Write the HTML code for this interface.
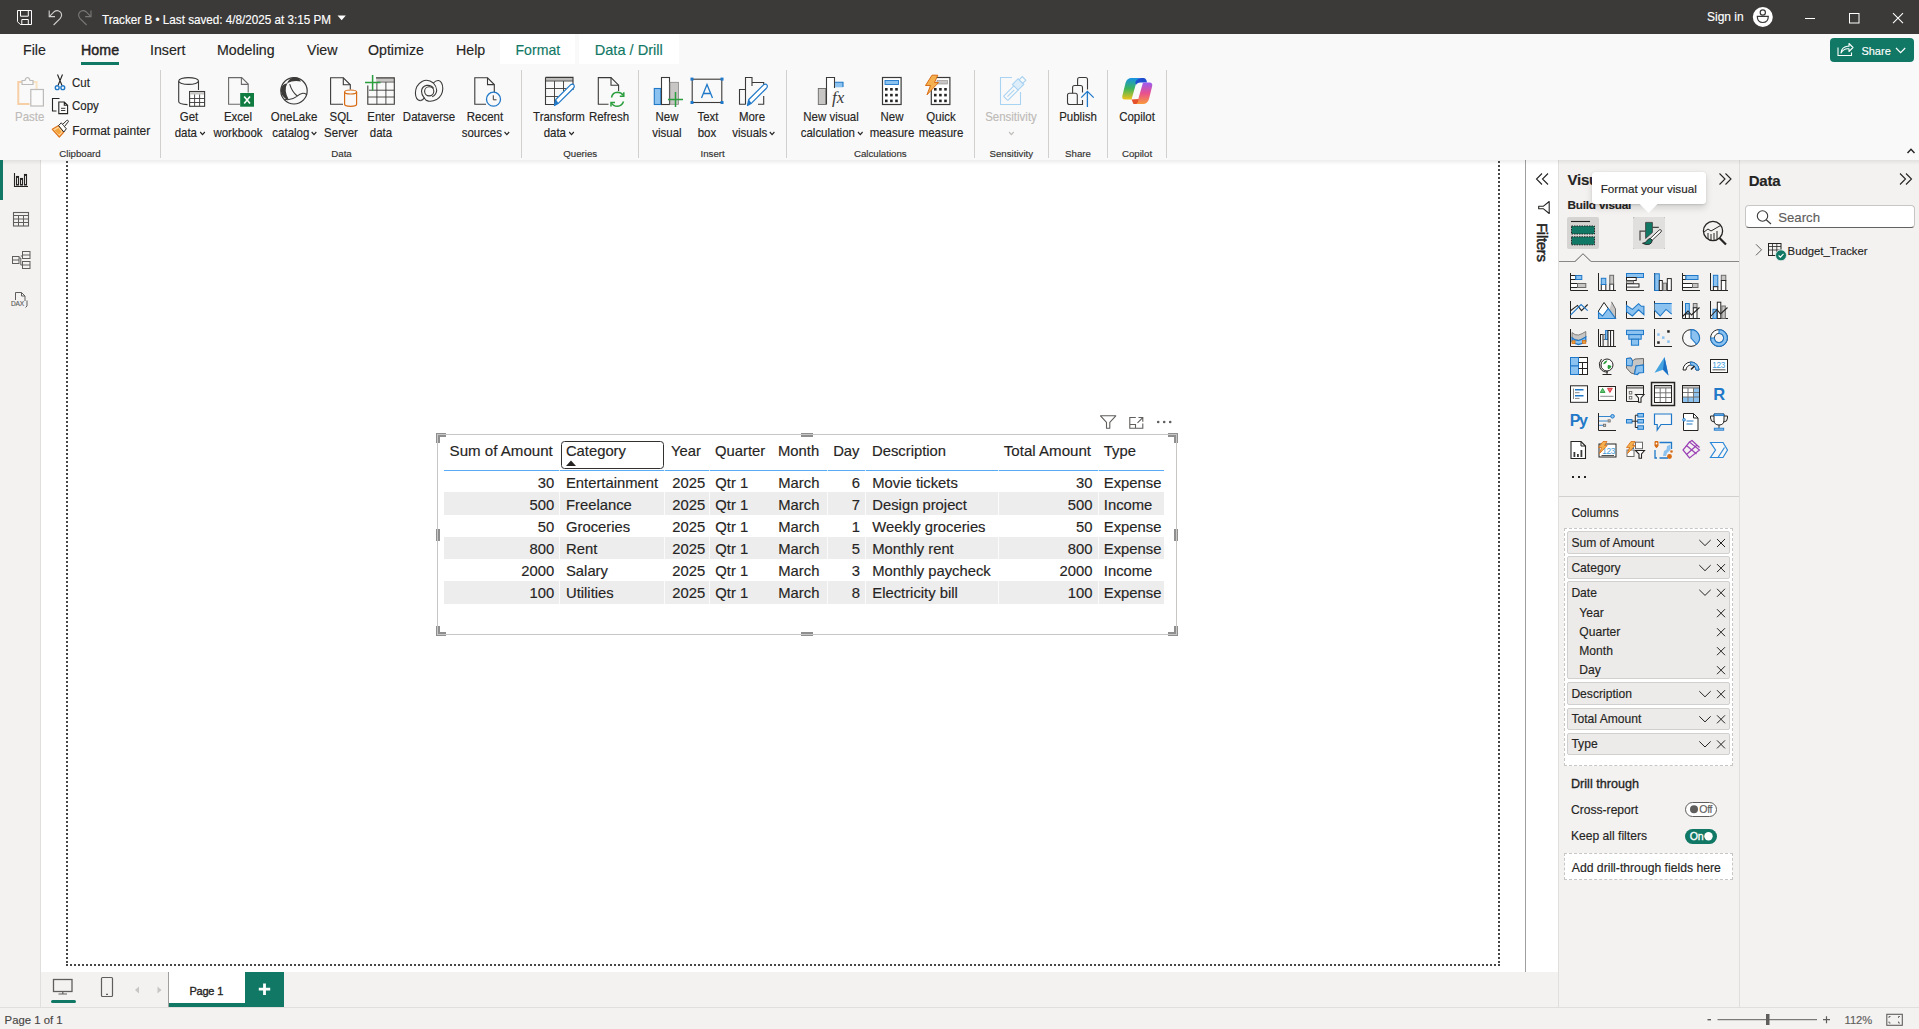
<!DOCTYPE html>
<html><head><meta charset="utf-8"><style>
html,body{margin:0;padding:0;}
body{width:1919px;height:1029px;overflow:hidden;position:relative;background:#ffffff;font-family:"Liberation Sans", sans-serif;}
.a{position:absolute;}
.t{position:absolute;white-space:nowrap;line-height:1;-webkit-text-stroke:0.15px currentColor;}
svg.a{overflow:visible;}
</style></head><body>
<div class="a" style="left:0px;top:0px;width:1919px;height:34px;background:#3b3a39"></div>
<div class="a" style="left:0px;top:34px;width:1919px;height:126px;background:#f9f9f9"></div>
<div class="a" style="left:0px;top:160px;width:40px;height:847px;background:#f3f2f1"></div>
<div class="a" style="left:40px;top:160px;width:1px;height:847px;background:#e1dfdd"></div>
<div class="a" style="left:41px;top:972px;width:1517px;height:35px;background:#f3f2f1"></div>
<div class="a" style="left:0px;top:1007px;width:1919px;height:1px;background:#e1dfdd"></div>
<div class="a" style="left:0px;top:1008px;width:1919px;height:21px;background:#f3f2f1"></div>
<div class="a" style="left:1525px;top:160px;width:1px;height:812px;background:#a19f9d"></div>
<div class="a" style="left:1558px;top:160px;width:1px;height:847px;background:#e1dfdd"></div>
<div class="a" style="left:1559px;top:160px;width:180px;height:847px;background:#f3f2f1"></div>
<div class="a" style="left:1739px;top:160px;width:1px;height:847px;background:#e1dfdd"></div>
<div class="a" style="left:1740px;top:160px;width:179px;height:847px;background:#f3f2f1"></div>
<div class="a" style="left:0px;top:160px;width:1919px;height:5px;background:linear-gradient(rgba(0,0,0,0.07),rgba(0,0,0,0))"></div>
<div class="a" style="left:0px;top:160px;width:3px;height:40px;background:#117865"></div>
<div class="a" style="left:66px;top:161px;width:2px;height:805px;background:repeating-linear-gradient(#484644 0 2px,transparent 2px 4px)"></div>
<div class="a" style="left:1498px;top:161px;width:2px;height:805px;background:repeating-linear-gradient(#484644 0 2px,transparent 2px 4px)"></div>
<div class="a" style="left:66px;top:964px;width:1434px;height:2px;background:repeating-linear-gradient(90deg,#484644 0 2px,transparent 2px 4px)"></div>
<div class="t" style="left:102.00px;top:14.33px;font-size:12.6px;color:#ffffff;font-weight:normal;transform:scaleX(0.928);transform-origin:0 0;">Tracker B &#8226; Last saved: 4/8/2025 at 3:15 PM</div>
<div class="t" style="left:1706.60px;top:11.36px;font-size:12.8px;color:#ffffff;font-weight:normal;transform:scaleX(0.937);transform-origin:0 0;">Sign in</div>
<div class="t" style="left:23.00px;top:43.18px;font-size:14.2px;color:#252423;font-weight:normal;">File</div>
<div class="t" style="left:150.00px;top:43.18px;font-size:14.2px;color:#252423;font-weight:normal;">Insert</div>
<div class="t" style="left:217.00px;top:43.18px;font-size:14.2px;color:#252423;font-weight:normal;">Modeling</div>
<div class="t" style="left:307.00px;top:43.18px;font-size:14.2px;color:#252423;font-weight:normal;">View</div>
<div class="t" style="left:368.00px;top:43.18px;font-size:14.2px;color:#252423;font-weight:normal;">Optimize</div>
<div class="t" style="left:456.00px;top:43.18px;font-size:14.2px;color:#252423;font-weight:normal;">Help</div>
<div class="t" style="left:81.00px;top:43.18px;font-size:14.2px;color:#252423;font-weight:normal;-webkit-text-stroke:0.45px #252423;letter-spacing:0.1px">Home</div>
<div class="a" style="left:500px;top:34px;width:75px;height:30px;background:#ffffff"></div>
<div class="a" style="left:579px;top:34px;width:100px;height:30px;background:#ffffff"></div>
<div class="t" style="left:515.50px;top:43.26px;font-size:14.1px;color:#117865;font-weight:normal;">Format</div>
<div class="t" style="left:594.70px;top:42.84px;font-size:14.6px;color:#117865;font-weight:normal;">Data / Drill</div>
<div class="a" style="left:81px;top:62px;width:38px;height:3px;background:#117865"></div>
<div class="t" style="left:14.60px;top:111.41px;font-size:12.397px;color:#bebbb8;font-weight:normal;transform:scaleX(0.927);transform-origin:0 0;">Paste</div>
<div class="t" style="left:72.20px;top:76.51px;font-size:12.397px;color:#252423;font-weight:normal;transform:scaleX(0.927);transform-origin:0 0;">Cut</div>
<div class="t" style="left:72.20px;top:100.31px;font-size:12.397px;color:#252423;font-weight:normal;transform:scaleX(0.927);transform-origin:0 0;">Copy</div>
<div class="t" style="left:72.20px;top:124.84px;font-size:12px;color:#252423;font-weight:normal;">Format painter</div>
<div class="t" style="left:129.30px;width:120px;top:111.41px;font-size:12.397px;color:#252423;font-weight:normal;text-align:center;transform:scaleX(0.927);transform-origin:50% 0;">Get</div>
<div class="t" style="left:129.50px;width:120px;top:127.21px;font-size:12.397px;color:#252423;font-weight:normal;text-align:center;transform:scaleX(0.927);transform-origin:50% 0;">data<svg width="7" height="5" viewBox="0 0 7 5" style="margin-left:2px;vertical-align:1px"><path d="M1 1L3.5 3.6L6 1" stroke="#252423" stroke-width="1.25" fill="none"/></svg></div>
<div class="t" style="left:177.80px;width:120px;top:111.41px;font-size:12.397px;color:#252423;font-weight:normal;text-align:center;transform:scaleX(0.927);transform-origin:50% 0;">Excel</div>
<div class="t" style="left:177.80px;width:120px;top:127.21px;font-size:12.397px;color:#252423;font-weight:normal;text-align:center;transform:scaleX(0.927);transform-origin:50% 0;">workbook</div>
<div class="t" style="left:233.50px;width:120px;top:111.41px;font-size:12.397px;color:#252423;font-weight:normal;text-align:center;transform:scaleX(0.927);transform-origin:50% 0;">OneLake</div>
<div class="t" style="left:234.50px;width:120px;top:127.21px;font-size:12.397px;color:#252423;font-weight:normal;text-align:center;transform:scaleX(0.927);transform-origin:50% 0;">catalog<svg width="7" height="5" viewBox="0 0 7 5" style="margin-left:2px;vertical-align:1px"><path d="M1 1L3.5 3.6L6 1" stroke="#252423" stroke-width="1.25" fill="none"/></svg></div>
<div class="t" style="left:280.80px;width:120px;top:111.41px;font-size:12.397px;color:#252423;font-weight:normal;text-align:center;transform:scaleX(0.927);transform-origin:50% 0;">SQL</div>
<div class="t" style="left:281.00px;width:120px;top:127.21px;font-size:12.397px;color:#252423;font-weight:normal;text-align:center;transform:scaleX(0.927);transform-origin:50% 0;">Server</div>
<div class="t" style="left:321.30px;width:120px;top:111.41px;font-size:12.397px;color:#252423;font-weight:normal;text-align:center;transform:scaleX(0.927);transform-origin:50% 0;">Enter</div>
<div class="t" style="left:320.80px;width:120px;top:127.21px;font-size:12.397px;color:#252423;font-weight:normal;text-align:center;transform:scaleX(0.927);transform-origin:50% 0;">data</div>
<div class="t" style="left:369.20px;width:120px;top:111.41px;font-size:12.397px;color:#252423;font-weight:normal;text-align:center;transform:scaleX(0.927);transform-origin:50% 0;">Dataverse</div>
<div class="t" style="left:425.40px;width:120px;top:111.41px;font-size:12.397px;color:#252423;font-weight:normal;text-align:center;transform:scaleX(0.927);transform-origin:50% 0;">Recent</div>
<div class="t" style="left:426.00px;width:120px;top:127.21px;font-size:12.397px;color:#252423;font-weight:normal;text-align:center;transform:scaleX(0.927);transform-origin:50% 0;">sources<svg width="7" height="5" viewBox="0 0 7 5" style="margin-left:2px;vertical-align:1px"><path d="M1 1L3.5 3.6L6 1" stroke="#252423" stroke-width="1.25" fill="none"/></svg></div>
<div class="t" style="left:498.50px;width:120px;top:111.41px;font-size:12.397px;color:#252423;font-weight:normal;text-align:center;transform:scaleX(0.927);transform-origin:50% 0;">Transform</div>
<div class="t" style="left:499.00px;width:120px;top:127.21px;font-size:12.397px;color:#252423;font-weight:normal;text-align:center;transform:scaleX(0.927);transform-origin:50% 0;">data<svg width="7" height="5" viewBox="0 0 7 5" style="margin-left:2px;vertical-align:1px"><path d="M1 1L3.5 3.6L6 1" stroke="#252423" stroke-width="1.25" fill="none"/></svg></div>
<div class="t" style="left:548.60px;width:120px;top:111.41px;font-size:12.397px;color:#252423;font-weight:normal;text-align:center;transform:scaleX(0.927);transform-origin:50% 0;">Refresh</div>
<div class="t" style="left:607.40px;width:120px;top:111.41px;font-size:12.397px;color:#252423;font-weight:normal;text-align:center;transform:scaleX(0.927);transform-origin:50% 0;">New</div>
<div class="t" style="left:607.00px;width:120px;top:127.21px;font-size:12.397px;color:#252423;font-weight:normal;text-align:center;transform:scaleX(0.927);transform-origin:50% 0;">visual</div>
<div class="t" style="left:647.50px;width:120px;top:111.41px;font-size:12.397px;color:#252423;font-weight:normal;text-align:center;transform:scaleX(0.927);transform-origin:50% 0;">Text</div>
<div class="t" style="left:647.20px;width:120px;top:127.21px;font-size:12.397px;color:#252423;font-weight:normal;text-align:center;transform:scaleX(0.927);transform-origin:50% 0;">box</div>
<div class="t" style="left:692.40px;width:120px;top:111.41px;font-size:12.397px;color:#252423;font-weight:normal;text-align:center;transform:scaleX(0.927);transform-origin:50% 0;">More</div>
<div class="t" style="left:694.00px;width:120px;top:127.21px;font-size:12.397px;color:#252423;font-weight:normal;text-align:center;transform:scaleX(0.927);transform-origin:50% 0;">visuals<svg width="7" height="5" viewBox="0 0 7 5" style="margin-left:2px;vertical-align:1px"><path d="M1 1L3.5 3.6L6 1" stroke="#252423" stroke-width="1.25" fill="none"/></svg></div>
<div class="t" style="left:771.40px;width:120px;top:111.41px;font-size:12.397px;color:#252423;font-weight:normal;text-align:center;transform:scaleX(0.927);transform-origin:50% 0;">New visual</div>
<div class="t" style="left:772.00px;width:120px;top:127.21px;font-size:12.397px;color:#252423;font-weight:normal;text-align:center;transform:scaleX(0.927);transform-origin:50% 0;">calculation<svg width="7" height="5" viewBox="0 0 7 5" style="margin-left:2px;vertical-align:1px"><path d="M1 1L3.5 3.6L6 1" stroke="#252423" stroke-width="1.25" fill="none"/></svg></div>
<div class="t" style="left:832.20px;width:120px;top:111.41px;font-size:12.397px;color:#252423;font-weight:normal;text-align:center;transform:scaleX(0.927);transform-origin:50% 0;">New</div>
<div class="t" style="left:832.10px;width:120px;top:127.21px;font-size:12.397px;color:#252423;font-weight:normal;text-align:center;transform:scaleX(0.927);transform-origin:50% 0;">measure</div>
<div class="t" style="left:881.20px;width:120px;top:111.41px;font-size:12.397px;color:#252423;font-weight:normal;text-align:center;transform:scaleX(0.927);transform-origin:50% 0;">Quick</div>
<div class="t" style="left:880.90px;width:120px;top:127.21px;font-size:12.397px;color:#252423;font-weight:normal;text-align:center;transform:scaleX(0.927);transform-origin:50% 0;">measure</div>
<div class="t" style="left:951.10px;width:120px;top:111.41px;font-size:12.397px;color:#bebbb8;font-weight:normal;text-align:center;transform:scaleX(0.927);transform-origin:50% 0;">Sensitivity</div>
<div class="t" style="left:950.30px;width:120px;top:127.21px;font-size:12.397px;color:#bebbb8;font-weight:normal;text-align:center;transform:scaleX(0.927);transform-origin:50% 0;"><svg width="7" height="5" viewBox="0 0 7 5" style="margin-left:2px;vertical-align:1px"><path d="M1 1L3.5 3.6L6 1" stroke="#bebbb8" stroke-width="1.25" fill="none"/></svg></div>
<div class="t" style="left:1017.50px;width:120px;top:111.41px;font-size:12.397px;color:#252423;font-weight:normal;text-align:center;transform:scaleX(0.927);transform-origin:50% 0;">Publish</div>
<div class="t" style="left:1077.20px;width:120px;top:111.41px;font-size:12.397px;color:#252423;font-weight:normal;text-align:center;transform:scaleX(0.927);transform-origin:50% 0;">Copilot</div>
<div class="t" style="left:20.00px;width:120px;top:148.59px;font-size:9.7px;color:#323130;font-weight:normal;text-align:center;">Clipboard</div>
<div class="t" style="left:281.50px;width:120px;top:148.59px;font-size:9.7px;color:#323130;font-weight:normal;text-align:center;">Data</div>
<div class="t" style="left:520.20px;width:120px;top:148.59px;font-size:9.7px;color:#323130;font-weight:normal;text-align:center;">Queries</div>
<div class="t" style="left:652.60px;width:120px;top:148.59px;font-size:9.7px;color:#323130;font-weight:normal;text-align:center;">Insert</div>
<div class="t" style="left:820.30px;width:120px;top:148.59px;font-size:9.7px;color:#323130;font-weight:normal;text-align:center;">Calculations</div>
<div class="t" style="left:951.30px;width:120px;top:148.59px;font-size:9.7px;color:#323130;font-weight:normal;text-align:center;">Sensitivity</div>
<div class="t" style="left:1018.00px;width:120px;top:148.59px;font-size:9.7px;color:#323130;font-weight:normal;text-align:center;">Share</div>
<div class="t" style="left:1077.00px;width:120px;top:148.59px;font-size:9.7px;color:#323130;font-weight:normal;text-align:center;">Copilot</div>
<div class="a" style="left:160px;top:70px;width:1px;height:88px;background:#d2d0ce"></div>
<div class="a" style="left:521px;top:70px;width:1px;height:88px;background:#d2d0ce"></div>
<div class="a" style="left:638px;top:70px;width:1px;height:88px;background:#d2d0ce"></div>
<div class="a" style="left:786px;top:70px;width:1px;height:88px;background:#d2d0ce"></div>
<div class="a" style="left:974px;top:70px;width:1px;height:88px;background:#d2d0ce"></div>
<div class="a" style="left:1048px;top:70px;width:1px;height:88px;background:#d2d0ce"></div>
<div class="a" style="left:1107px;top:70px;width:1px;height:88px;background:#d2d0ce"></div>
<div class="a" style="left:1166px;top:70px;width:1px;height:88px;background:#d2d0ce"></div>
<svg class="a" style="left:0;top:0" width="1919" height="1029" viewBox="0 0 1919 1029" fill="none"><path d="M21.5 82H18.3V104H29.5" stroke="#f6cfa6" stroke-width="2"/><path d="M33 82H36.6V89" stroke="#f9e4c4" stroke-width="2"/><path d="M22 84.5V80.5H25Q25.5 77.5 27.5 77.5Q29.5 77.5 30 80.5H33V84.5Z" stroke="#bdbbb9" stroke-width="1.2" fill="#f9f9f9"/><rect x="30.8" y="89.5" width="12.6" height="16.5" stroke="#bdbbb9" stroke-width="1.2" fill="#fbfbfb"/><path d="M57.5 74.5L62 85.5M62.5 74.5L58 85.5" stroke="#252423" stroke-width="1.1"/><circle cx="57.2" cy="87.7" r="1.9" stroke="#1f78c8" stroke-width="1.4"/><circle cx="62.8" cy="87.7" r="1.9" stroke="#1f78c8" stroke-width="1.4"/><path d="M59.5 98.5H52.5V111H56.5" stroke="#252423" stroke-width="1.1"/><path d="M58.8 102V113.6H67.6V105.3L64.3 102Z M64.3 102V105.3H67.6" stroke="#252423" stroke-width="1.1" fill="#f9f9f9"/><path d="M61 108.3H65.3M61 110.5H65.3" stroke="#252423" stroke-width="0.9"/><path d="M52.3 129.3L58.6 125.6L63.8 132L59.3 137Z" fill="#fcd79a" stroke="#e0731a" stroke-width="1.2" stroke-linejoin="round"/><path d="M54.5 130.5L58.5 128L61.5 132L58.8 134.5Z" fill="#f4a43c"/><path d="M58.6 125.6L61.3 122.8L66.3 128.8L63.8 132Z" fill="#fff" stroke="#252423" stroke-width="1"/><path d="M62.8 124.3L66.6 120.6Q67.6 119.9 68.2 120.7Q68.7 121.5 67.9 122.2L64.5 126.5" fill="#fff" stroke="#252423" stroke-width="1"/><path d="M178.7 81V101.5Q178.7 104.2 187.5 104.6" stroke="#3b3a39" stroke-width="1.1"/><ellipse cx="188.6" cy="81" rx="9.9" ry="3.4" stroke="#3b3a39" stroke-width="1.1" fill="#f9f9f9"/><path d="M198.5 81V90" stroke="#3b3a39" stroke-width="1.1"/><rect x="189.6" y="91.5" width="15" height="14.8" fill="#fff" stroke="#3b3a39" stroke-width="1.1"/><rect x="190.2" y="92.1" width="13.8" height="2.4" fill="#c8c6c4"/><path d="M194.6 94.5V106M199.6 94.5V106M189.6 98.5H204.6M189.6 102.5H204.6" stroke="#3b3a39" stroke-width="0.9"/><path d="M240 104.2H228.6V77.6H241.7L248.2 84.1V92.5" stroke="#6b6a69" stroke-width="1.1"/><path d="M241.4 77.6V84.4H248.2" stroke="#6b6a69" stroke-width="1.1"/><rect x="240.2" y="93" width="13.8" height="13.7" fill="#107c41"/><path d="M244.2 96.5L250 103.5M250 96.5L244.2 103.5" stroke="#fff" stroke-width="1.6"/><circle cx="294" cy="90.8" r="13.2" stroke="#3b3a39" stroke-width="1.2"/><path d="M287.3 83.3Q283.5 90.5 288.7 99.6L286.5 99.5Q280.6 95.5 280.8 89.5Q281.6 84.2 287.3 83.3Z" fill="#3b3a39"/><path d="M286.8 83.8Q289 78.2 294.3 77.3Q299 76.8 301 81.6Q296 80.5 291.5 81.6Q288.8 82.5 286.8 83.8Z" fill="#3b3a39"/><path d="M289.7 84.2Q292 92 297.2 96M284.5 99.3Q291 100.8 296.5 96.6Q300 93.6 302.8 93.3Q305 93.2 306.6 94.6" stroke="#3b3a39" stroke-width="1.1"/><path d="M343 104.3H330.6V77.8H343.3L350.3 84.8V89.5" stroke="#3b3a39" stroke-width="1.1"/><path d="M343.3 77.8V84.8H350.3" stroke="#3b3a39" stroke-width="1.1"/><path d="M344.6 92V104.3Q344.6 106.3 350.6 106.3Q356.6 106.3 356.6 104.3V92" stroke="#d86c14" stroke-width="1.2" fill="#f9f9f9"/><ellipse cx="350.6" cy="92" rx="6" ry="2" stroke="#d86c14" stroke-width="1.2" fill="#f9f9f9"/><rect x="376.2" y="78" width="18.2" height="3" fill="#c8c6c4"/><path d="M376 77.9H394.3V104.3H367.8V85.5" stroke="#3b3a39" stroke-width="1.1"/><path d="M376.9 82V104.3M385.9 82V104.3M376.5 82H394.3M369 90.2H394.3M367.8 97H394.3" stroke="#3b3a39" stroke-width="0.9"/><path d="M372.6 75V90.5M365 82.4H380.5" stroke="#2a9d3c" stroke-width="1.5"/><path d="M420.3 100.6Q415.6 100.2 415.4 93Q415.6 85 422 81.4Q428 78.6 433.4 83Q436.6 86.5 436.7 90.2Q436.6 94.5 432.2 96.8" stroke="#3b3a39" stroke-width="1.1"/><circle cx="429.2" cy="91.3" r="4.6" stroke="#3b3a39" stroke-width="1.1"/><path d="M424.2 98Q421.4 94.5 421.5 91Q422 86.2 426.8 85.4Q431.8 85 433.6 88.6" stroke="#3b3a39" stroke-width="1.1"/><path d="M433.4 83Q435.8 80.2 438.6 80.5Q442.6 81.6 442.8 88.6Q442.6 96 436.6 99.6Q432.6 101.6 428.6 101.1Q425.6 100.6 424.2 98Q423 100.2 420.3 100.6" stroke="#3b3a39" stroke-width="1.1"/><path d="M486 104.3H474.8V77.8H487.5L494.3 84.6V92" stroke="#3b3a39" stroke-width="1.1"/><path d="M487.5 77.8V84.6H494.3" stroke="#3b3a39" stroke-width="1.1"/><circle cx="493.5" cy="99.2" r="7" stroke="#1f78c8" stroke-width="1.3" fill="#f9f9f9"/><path d="M493.3 95.3V99.8H496.5" stroke="#3b3a39" stroke-width="1"/><rect x="545.5" y="77.5" width="27.5" height="3.2" fill="#bdbbb9"/><path d="M545.5 77.4H573V90M545.5 77.4V104.5H554" stroke="#3b3a39" stroke-width="1.1"/><path d="M545.5 81H573M545.5 88.5H566M545.5 96.5H558M554.5 81V104.5M563.5 81V91" stroke="#3b3a39" stroke-width="0.9"/><path d="M554.5 105.5L555.8 99.5L570.5 84.8Q572.8 83.5 574 85Q575 86.8 573.2 88.5L558.5 103.2Z" fill="#fff" stroke="#1f78c8" stroke-width="1.2" stroke-linejoin="round"/><path d="M554.5 105.5L555.8 99.5L558.5 103.2Z" fill="#1f78c8"/><path d="M608.5 104.3H598.3V77.6H611L618.6 85.2V91" stroke="#3b3a39" stroke-width="1.1"/><path d="M611 77.6V85.2H618.6" stroke="#3b3a39" stroke-width="1.1"/><path d="M611.5 97.5Q612.5 92.5 617.5 92.3Q621.5 92.5 623.2 95.5M623.5 101.5Q622 106 617.5 106.3Q613 106.2 611.5 103" stroke="#2a9d3c" stroke-width="1.5"/><path d="M623.8 92.3V96.3H619.8M611 106.5V102.5H615" stroke="#2a9d3c" stroke-width="1.5"/><rect x="654.3" y="88.5" width="6.5" height="16" fill="#8cc2ef" stroke="#1f78c8" stroke-width="1.1"/><rect x="661.5" y="77.5" width="8" height="27" fill="#fff" stroke="#3b3a39" stroke-width="1.1"/><rect x="670" y="82.3" width="8.5" height="22" fill="#c8c6c4" stroke="#8a8886" stroke-width="0.8"/><path d="M675.5 92V107M668 99.4H683" stroke="#2a9d3c" stroke-width="1.5"/><rect x="692.2" y="79.2" width="29.6" height="23.3" stroke="#3b3a39" stroke-width="1.1"/><rect x="690.5" y="77.6" width="3" height="3" fill="#1f78c8"/><rect x="720.5" y="77.6" width="3" height="3" fill="#1f78c8"/><rect x="690.5" y="101" width="3" height="3" fill="#1f78c8"/><rect x="720.5" y="101" width="3" height="3" fill="#1f78c8"/><path d="M701.5 98L707 84.5L712.5 98M703.5 93.5H710.5" stroke="#1f78c8" stroke-width="1.3"/><path d="M745.5 104.3H739.5V89.5H745.5M745.5 104.5V77.5H752V86M752 82.5H763.7V89M758 104.3H763.7V96" stroke="#3b3a39" stroke-width="1.1"/><path d="M747.5 105.5L748.8 99.5L763.5 84.8Q765.8 83.5 767 85Q768 86.8 766.2 88.5L751.5 103.2Z" fill="#fff" stroke="#1f78c8" stroke-width="1.2" stroke-linejoin="round"/><path d="M747.5 105.5L748.8 99.5L751.5 103.2Z" fill="#1f78c8"/><rect x="818.3" y="88.5" width="7.5" height="16" fill="#c8c6c4" stroke="#6b6a69" stroke-width="0.9"/><path d="M826.5 104.5V77.5H834.5V88" stroke="#3b3a39" stroke-width="1.1" fill="#fff"/><rect x="835" y="82.3" width="8" height="5" fill="#8cc2ef"/><path d="M835 82.3H843V87" stroke="#1f78c8" stroke-width="1.1"/><text x="832" y="103" font-family="Liberation Serif" font-style="italic" font-size="17" fill="#3b3a39">fx</text><rect x="882.5" y="77.5" width="18.6" height="27" fill="#fff" stroke="#3b3a39" stroke-width="1.2"/><rect x="885" y="80.5" width="13.5" height="4" fill="#8cc2ef" stroke="#1f78c8" stroke-width="0.9"/><rect x="885.0" y="88.0" width="2.6" height="2.6" fill="#252423"/><rect x="885.0" y="93.8" width="2.6" height="2.6" fill="#252423"/><rect x="885.0" y="99.6" width="2.6" height="2.6" fill="#252423"/><rect x="890.1" y="88.0" width="2.6" height="2.6" fill="#252423"/><rect x="890.1" y="93.8" width="2.6" height="2.6" fill="#252423"/><rect x="890.1" y="99.6" width="2.6" height="2.6" fill="#252423"/><rect x="895.2" y="88.0" width="2.6" height="2.6" fill="#252423"/><rect x="895.2" y="93.8" width="2.6" height="2.6" fill="#252423"/><rect x="895.2" y="99.6" width="2.6" height="2.6" fill="#252423"/><rect x="931.3" y="77.5" width="18.6" height="27" fill="#fff" stroke="#3b3a39" stroke-width="1.2"/><rect x="937" y="80.5" width="10.5" height="3.5" fill="#c8c6c4" stroke="#8a8886" stroke-width="0.6"/><rect x="934.0" y="88.0" width="2.6" height="2.6" fill="#252423"/><rect x="934.0" y="93.8" width="2.6" height="2.6" fill="#252423"/><rect x="934.0" y="99.6" width="2.6" height="2.6" fill="#252423"/><rect x="939.1" y="88.0" width="2.6" height="2.6" fill="#252423"/><rect x="939.1" y="93.8" width="2.6" height="2.6" fill="#252423"/><rect x="939.1" y="99.6" width="2.6" height="2.6" fill="#252423"/><rect x="944.2" y="88.0" width="2.6" height="2.6" fill="#252423"/><rect x="944.2" y="93.8" width="2.6" height="2.6" fill="#252423"/><rect x="944.2" y="99.6" width="2.6" height="2.6" fill="#252423"/><path d="M932 75.2H937.8L934.5 82.5H938.5L927 94.8L930.5 85.5H925.5Z" fill="#f4b04f" stroke="#d86c14" stroke-width="1" stroke-linejoin="round"/><path d="M1012 77.5H1000.5V104.5H1020.5V92" stroke="#a9d3f2" stroke-width="1.1"/><g transform="rotate(-45 1011 93)"><rect x="1003.5" y="90" width="15" height="6" rx="0.5" stroke="#a9d3f2" stroke-width="1.1" fill="#f9f9f9"/><path d="M1006 93H1015.5" stroke="#a9d3f2" stroke-width="1.1"/></g><g transform="rotate(-45 1019.5 83)"><rect x="1013.5" y="79" width="8" height="8" stroke="#a9d3f2" stroke-width="1.1" fill="#ddeefa"/><rect x="1021.5" y="80.5" width="4.5" height="5" stroke="#a9d3f2" stroke-width="1.1" fill="#f9f9f9"/></g><path d="M1077.3 104.5H1069.5Q1067.5 104.5 1067.5 102.5V95.3Q1067.5 93.3 1069.5 93.3H1075.3Q1077.3 93.3 1077.3 95.3Z" stroke="#3b3a39" stroke-width="1.1"/><path d="M1072.6 93.3V87.5Q1072.6 85.5 1074.6 85.5H1080.5Q1082.5 85.5 1082.5 87.5V92.5M1077.3 104.5H1082.5V100" stroke="#3b3a39" stroke-width="1.1"/><path d="M1077.6 85.5V79.5Q1077.6 77.5 1079.6 77.5H1085.5Q1087.5 77.5 1087.5 79.5V89.5" stroke="#3b3a39" stroke-width="1.1"/><path d="M1087.4 107V91.5M1081.2 97.6L1087.4 91.4L1093.7 97.6" stroke="#1f78c8" stroke-width="1.3"/><defs><linearGradient id="cpg1" x1="0" y1="0" x2="0" y2="1"><stop offset="0" stop-color="#1592e6"/><stop offset="0.5" stop-color="#3fb55a"/><stop offset="1" stop-color="#f3c21a"/></linearGradient>
<linearGradient id="cpg2" x1="0" y1="0" x2="0" y2="1"><stop offset="0" stop-color="#9b5cf0"/><stop offset="0.5" stop-color="#e9508e"/><stop offset="1" stop-color="#f89a3a"/></linearGradient></defs><path d="M1131.5 78Q1127 78 1125.5 83L1122.3 96Q1121.7 99.5 1125 99.5H1131.5L1136.5 82Q1137.8 78 1141 78Z" fill="url(#cpg1)"/><path d="M1135.3 82.5Q1137 78 1141 78H1144Q1146.5 78.5 1147 82.5H1140.5Q1137 82.5 1136 85Z" fill="#1f4fd0"/><path d="M1143 104Q1147.5 104 1149 99L1152.2 86Q1152.8 82.5 1149.5 82.5H1143L1138 100Q1136.7 104 1133.5 104Z" fill="url(#cpg2)"/><path d="M1131.5 99.5L1133.5 104H1136Q1138 103.5 1138.5 99Z" fill="#e5512a"/></svg>
<svg class="a" style="left:0;top:0" width="1919" height="1029" viewBox="0 0 1919 1029" fill="none"><path d="M17.5 10.5H31.5V24.5H20.3L17.5 21.7Z" stroke="#fff" stroke-width="1"/><path d="M20.5 10.5V16.2H28.3V10.5M21.8 24.5V19.5H28.3V24.5" stroke="#fff" stroke-width="1"/><path d="M49.2 10.5V16.6H55" stroke="#d2d0ce" stroke-width="1.1"/><path d="M49.5 16.3L54 11.8Q57.5 9.3 60.5 12.2Q62.8 15.3 60.3 18.3L53.6 25" stroke="#d2d0ce" stroke-width="1.1"/><path d="M91 10.5V16.6H85.2" stroke="#7a7877" stroke-width="1.1"/><path d="M90.7 16.3L86.2 11.8Q82.7 9.3 79.7 12.2Q77.4 15.3 79.9 18.3L86.6 25" stroke="#7a7877" stroke-width="1.1"/><path d="M337.5 15.5H345.8L341.65 20.2Z" fill="#fff"/><circle cx="1762.8" cy="17" r="10" fill="#fff"/><circle cx="1762.8" cy="12.5" r="2.6" stroke="#3b3a39" stroke-width="1.2"/><path d="M1757.3 16.3H1768.3Q1768.3 22.5 1762.8 22.5Q1757.3 22.5 1757.3 16.3Z" stroke="#3b3a39" stroke-width="1.2"/><path d="M1805 18.5H1815" stroke="#fff" stroke-width="1"/><rect x="1849.5" y="13.5" width="9.5" height="9.5" stroke="#fff" stroke-width="1"/><path d="M1893 13.2L1903 23.2M1903 13.2L1893 23.2" stroke="#fff" stroke-width="1.1"/></svg>
<div class="a" style="left:1830px;top:38px;width:84px;height:24px;background:#117865;border-radius:4px"></div>
<div class="t" style="left:1861.40px;top:46.19px;font-size:11px;color:#ffffff;font-weight:normal;">Share</div>
<svg class="a" style="left:0;top:0" width="1919" height="1029" viewBox="0 0 1919 1029" fill="none"><path d="M1838 47.5V55.5H1851.5V52.5" stroke="#fff" stroke-width="1.1"/><path d="M1841 53Q1841.5 47 1847.5 46.3H1849V43.5L1853 47.5L1849 51.5V48.8H1847.5Q1843.5 49 1841 53Z" stroke="#fff" stroke-width="1.1" stroke-linejoin="round"/><path d="M1896 48L1900.6 52.6L1905.2 48" stroke="#fff" stroke-width="1.2"/><path d="M1907.5 153L1911 149.2L1914.5 153" stroke="#252423" stroke-width="1.4"/></svg>
<div class="t" style="left:11px;top:300.5px;font-size:6.5px;color:#605e5c;letter-spacing:-0.2px">DAX</div>
<svg class="a" style="left:0;top:0" width="1919" height="1029" viewBox="0 0 1919 1029" fill="none"><path d="M14.5 173V186.5H28" stroke="#252423" stroke-width="1.1"/><rect x="16.5" y="176.5" width="2" height="8.5" stroke="#252423" stroke-width="1.1"/><rect x="20.5" y="178.5" width="2" height="6.5" stroke="#252423" stroke-width="1.1"/><rect x="24.5" y="174.5" width="2" height="10.5" stroke="#252423" stroke-width="1.1"/><rect x="13.5" y="212.5" width="15" height="13.5" stroke="#605e5c" stroke-width="1.1"/><path d="M13.5 215.5H28.5M13.5 219H28.5M13.5 222.5H28.5M18.5 215.5V226M23.5 215.5V226" stroke="#605e5c" stroke-width="1"/><rect x="12.5" y="256.5" width="6.5" height="7" stroke="#605e5c" stroke-width="1"/><path d="M12.5 260H19" stroke="#605e5c" stroke-width="1"/><rect x="22.5" y="251.5" width="7.5" height="7" stroke="#605e5c" stroke-width="1"/><path d="M22.5 255H30" stroke="#605e5c" stroke-width="1"/><rect x="22.5" y="261.5" width="7.5" height="7" stroke="#605e5c" stroke-width="1"/><path d="M22.5 265H30" stroke="#605e5c" stroke-width="1"/><path d="M19 258H20.8V265H22.5M20.8 256H22.5" stroke="#605e5c" stroke-width="1"/><path d="M15.5 300V292.5H21.5L25 296V301M25 296H21.5V292.5M27 300.5V306L25.5 307.5" stroke="#605e5c" stroke-width="1"/></svg>
<svg class="a" style="left:0;top:0" width="1919" height="1029" viewBox="0 0 1919 1029" fill="none"><rect x="53.5" y="979.5" width="18.5" height="12" stroke="#605e5c" stroke-width="1.3"/><path d="M62.8 992V994M58.5 994H67" stroke="#605e5c" stroke-width="1.2"/><rect x="101.5" y="977.5" width="11" height="19" rx="1" stroke="#605e5c" stroke-width="1.2"/><path d="M106 994.3H108" stroke="#605e5c" stroke-width="1.2"/><path d="M139 986.5L135 990L139 993.5Z" fill="#c8c6c4"/><path d="M157.5 986.5L161.5 990L157.5 993.5Z" fill="#c8c6c4"/></svg>
<div class="a" style="left:51px;top:1000px;width:25px;height:3px;background:#117865;border-radius:2px"></div>
<div class="a" style="left:168px;top:972px;width:1px;height:35px;background:#a19f9d"></div>
<div class="a" style="left:169px;top:972px;width:76px;height:35px;background:#ffffff"></div>
<div class="a" style="left:169px;top:1003px;width:76px;height:4px;background:#117865"></div>
<div class="a" style="left:245px;top:972px;width:39px;height:35px;background:#117865"></div>
<svg class="a" style="left:0;top:0" width="1919" height="1029" viewBox="0 0 1919 1029" fill="none"><path d="M264.5 983.5V995M258.8 989.2H270.2" stroke="#fff" stroke-width="2.8"/></svg>
<div class="t" style="left:189.40px;top:985.99px;font-size:11px;color:#252423;font-weight:normal;-webkit-text-stroke:0.35px #252423;letter-spacing:-0.2px">Page 1</div>
<div class="t" style="left:4.60px;top:1015.20px;font-size:11.34px;color:#484644;font-weight:normal;">Page 1 of 1</div>
<svg class="a" style="left:0;top:0" width="1919" height="1029" viewBox="0 0 1919 1029" fill="none"><path d="M1707.5 1019.7H1711" stroke="#605e5c" stroke-width="1.4"/><path d="M1717.5 1019.7H1817" stroke="#605e5c" stroke-width="1"/><rect x="1766" y="1014" width="3.5" height="11" fill="#605e5c"/><path d="M1823 1019.7H1830M1826.5 1016.2V1023.2" stroke="#605e5c" stroke-width="1.2"/><rect x="1886.8" y="1014.3" width="15.5" height="11" stroke="#605e5c" stroke-width="1.1"/><path d="M1889 1018V1016.5H1890.5M1900 1016.5H1898.5V1018M1889 1021.5V1023H1890.5M1900 1023H1898.5V1021.5" stroke="#605e5c" stroke-width="0.9"/></svg>
<div class="t" style="left:1844.50px;top:1014.52px;font-size:11.2px;color:#605e5c;font-weight:normal;">112%</div>
<div class="a" style="left:436px;top:433px;width:10px;height:4px;background:#8f8f8f"></div>
<div class="a" style="left:436px;top:433px;width:4px;height:10px;background:#8f8f8f"></div>
<div class="a" style="left:1168px;top:433px;width:10px;height:4px;background:#8f8f8f"></div>
<div class="a" style="left:1174px;top:433px;width:4px;height:10px;background:#8f8f8f"></div>
<div class="a" style="left:436px;top:632px;width:10px;height:4px;background:#8f8f8f"></div>
<div class="a" style="left:436px;top:626px;width:4px;height:10px;background:#8f8f8f"></div>
<div class="a" style="left:1168px;top:632px;width:10px;height:4px;background:#8f8f8f"></div>
<div class="a" style="left:1174px;top:626px;width:4px;height:10px;background:#8f8f8f"></div>
<div class="a" style="left:801px;top:433px;width:12px;height:4px;background:#8f8f8f"></div>
<div class="a" style="left:801px;top:632px;width:12px;height:4px;background:#8f8f8f"></div>
<div class="a" style="left:436px;top:529px;width:4px;height:12px;background:#8f8f8f"></div>
<div class="a" style="left:1174px;top:529px;width:4px;height:12px;background:#8f8f8f"></div>
<div class="a" style="left:437px;top:434px;width:740px;height:1px;background:#c8c6c4"></div>
<div class="a" style="left:437px;top:634px;width:740px;height:1px;background:#c8c6c4"></div>
<div class="a" style="left:437px;top:434px;width:1px;height:201px;background:#c8c6c4"></div>
<div class="a" style="left:1176px;top:434px;width:1px;height:201px;background:#c8c6c4"></div>
<svg class="a" style="left:0;top:0" width="1919" height="1029" viewBox="0 0 1919 1029" fill="none"><path d="M1100.5 415.8H1115.8L1109.8 422.3V428.3H1106.5V422.3Z" stroke="#605e5c" stroke-width="1.1" stroke-linejoin="round"/><path d="M1135.8 417.5H1129.8V428.3H1142.8V423.5M1129.8 424.5H1135.5V428.3M1137.5 422.8L1142.5 417.8M1138.5 417.5H1142.8V421.8" stroke="#605e5c" stroke-width="1.1"/><circle cx="1158.2" cy="422" r="1.3" fill="#605e5c"/><circle cx="1164.2" cy="422" r="1.3" fill="#605e5c"/><circle cx="1170.2" cy="422" r="1.3" fill="#605e5c"/></svg>
<div class="a" style="left:444px;top:492.40px;width:720px;height:22.3px;background:#ededed"></div>
<div class="a" style="left:444px;top:536.94px;width:720px;height:22.3px;background:#ededed"></div>
<div class="a" style="left:444px;top:581.48px;width:720px;height:22.3px;background:#ededed"></div>
<div class="a" style="left:444px;top:469.6px;width:720px;height:1.7px;background:#5aabf5"></div>
<div class="a" style="left:559.4px;top:469px;width:1px;height:135px;background:rgba(255,255,255,0.75)"></div>
<div class="a" style="left:664.4px;top:469px;width:1px;height:135px;background:rgba(255,255,255,0.75)"></div>
<div class="a" style="left:709.3px;top:469px;width:1px;height:135px;background:rgba(255,255,255,0.75)"></div>
<div class="a" style="left:827.4px;top:469px;width:1px;height:135px;background:rgba(255,255,255,0.75)"></div>
<div class="a" style="left:865.2px;top:469px;width:1px;height:135px;background:rgba(255,255,255,0.75)"></div>
<div class="a" style="left:997.6px;top:469px;width:1px;height:135px;background:rgba(255,255,255,0.75)"></div>
<div class="a" style="left:1098.0px;top:469px;width:1px;height:135px;background:rgba(255,255,255,0.75)"></div>
<div class="a" style="left:561px;top:440.5px;width:101px;height:26.5px;border:1.4px solid #323130;border-radius:3.5px;box-sizing:content-box"></div>
<svg class="a" style="left:0;top:0" width="1919" height="1029" viewBox="0 0 1919 1029" fill="none"><path d="M566 466H576L571 460.6Z" fill="#252423"/></svg>
<div class="t" style="left:449.60px;top:443.42px;font-size:15.1px;color:#252423;font-weight:normal;">Sum of Amount</div>
<div class="t" style="left:565.90px;top:443.67px;font-size:14.8px;color:#252423;font-weight:normal;">Category</div>
<div class="t" style="left:671.00px;top:443.67px;font-size:14.8px;color:#252423;font-weight:normal;">Year</div>
<div class="t" style="left:715.00px;top:443.67px;font-size:14.8px;color:#252423;font-weight:normal;">Quarter</div>
<div class="t" style="left:778.00px;top:443.67px;font-size:14.8px;color:#252423;font-weight:normal;">Month</div>
<div class="t" style="right:1059.50px;top:443.67px;font-size:14.8px;color:#252423;font-weight:normal;text-align:right;">Day</div>
<div class="t" style="left:872.00px;top:443.67px;font-size:14.8px;color:#252423;font-weight:normal;">Description</div>
<div class="t" style="left:1003.80px;top:443.42px;font-size:15.1px;color:#252423;font-weight:normal;">Total Amount</div>
<div class="t" style="left:1103.80px;top:443.67px;font-size:14.8px;color:#252423;font-weight:normal;">Type</div>
<div class="t" style="right:1364.80px;top:475.77px;font-size:14.8px;color:#252423;font-weight:normal;text-align:right;">30</div>
<div class="t" style="left:566.00px;top:475.77px;font-size:14.8px;color:#252423;font-weight:normal;">Entertainment</div>
<div class="t" style="left:672.20px;top:475.77px;font-size:14.8px;color:#252423;font-weight:normal;">2025</div>
<div class="t" style="left:715.30px;top:475.77px;font-size:14.8px;color:#252423;font-weight:normal;">Qtr 1</div>
<div class="t" style="left:778.30px;top:475.77px;font-size:14.8px;color:#252423;font-weight:normal;">March</div>
<div class="t" style="right:1059.00px;top:475.77px;font-size:14.8px;color:#252423;font-weight:normal;text-align:right;">6</div>
<div class="t" style="left:872.30px;top:475.77px;font-size:14.8px;color:#252423;font-weight:normal;">Movie tickets</div>
<div class="t" style="right:826.60px;top:475.77px;font-size:14.8px;color:#252423;font-weight:normal;text-align:right;">30</div>
<div class="t" style="left:1103.80px;top:475.77px;font-size:14.8px;color:#252423;font-weight:normal;">Expense</div>
<div class="t" style="right:1364.80px;top:497.89px;font-size:14.8px;color:#252423;font-weight:normal;text-align:right;">500</div>
<div class="t" style="left:566.00px;top:497.89px;font-size:14.8px;color:#252423;font-weight:normal;">Freelance</div>
<div class="t" style="left:672.20px;top:497.89px;font-size:14.8px;color:#252423;font-weight:normal;">2025</div>
<div class="t" style="left:715.30px;top:497.89px;font-size:14.8px;color:#252423;font-weight:normal;">Qtr 1</div>
<div class="t" style="left:778.30px;top:497.89px;font-size:14.8px;color:#252423;font-weight:normal;">March</div>
<div class="t" style="right:1059.00px;top:497.89px;font-size:14.8px;color:#252423;font-weight:normal;text-align:right;">7</div>
<div class="t" style="left:872.30px;top:497.89px;font-size:14.8px;color:#252423;font-weight:normal;">Design project</div>
<div class="t" style="right:826.60px;top:497.89px;font-size:14.8px;color:#252423;font-weight:normal;text-align:right;">500</div>
<div class="t" style="left:1103.80px;top:497.89px;font-size:14.8px;color:#252423;font-weight:normal;">Income</div>
<div class="t" style="right:1364.80px;top:520.01px;font-size:14.8px;color:#252423;font-weight:normal;text-align:right;">50</div>
<div class="t" style="left:566.00px;top:520.01px;font-size:14.8px;color:#252423;font-weight:normal;">Groceries</div>
<div class="t" style="left:672.20px;top:520.01px;font-size:14.8px;color:#252423;font-weight:normal;">2025</div>
<div class="t" style="left:715.30px;top:520.01px;font-size:14.8px;color:#252423;font-weight:normal;">Qtr 1</div>
<div class="t" style="left:778.30px;top:520.01px;font-size:14.8px;color:#252423;font-weight:normal;">March</div>
<div class="t" style="right:1059.00px;top:520.01px;font-size:14.8px;color:#252423;font-weight:normal;text-align:right;">1</div>
<div class="t" style="left:872.30px;top:520.01px;font-size:14.8px;color:#252423;font-weight:normal;">Weekly groceries</div>
<div class="t" style="right:826.60px;top:520.01px;font-size:14.8px;color:#252423;font-weight:normal;text-align:right;">50</div>
<div class="t" style="left:1103.80px;top:520.01px;font-size:14.8px;color:#252423;font-weight:normal;">Expense</div>
<div class="t" style="right:1364.80px;top:542.13px;font-size:14.8px;color:#252423;font-weight:normal;text-align:right;">800</div>
<div class="t" style="left:566.00px;top:542.13px;font-size:14.8px;color:#252423;font-weight:normal;">Rent</div>
<div class="t" style="left:672.20px;top:542.13px;font-size:14.8px;color:#252423;font-weight:normal;">2025</div>
<div class="t" style="left:715.30px;top:542.13px;font-size:14.8px;color:#252423;font-weight:normal;">Qtr 1</div>
<div class="t" style="left:778.30px;top:542.13px;font-size:14.8px;color:#252423;font-weight:normal;">March</div>
<div class="t" style="right:1059.00px;top:542.13px;font-size:14.8px;color:#252423;font-weight:normal;text-align:right;">5</div>
<div class="t" style="left:872.30px;top:542.13px;font-size:14.8px;color:#252423;font-weight:normal;">Monthly rent</div>
<div class="t" style="right:826.60px;top:542.13px;font-size:14.8px;color:#252423;font-weight:normal;text-align:right;">800</div>
<div class="t" style="left:1103.80px;top:542.13px;font-size:14.8px;color:#252423;font-weight:normal;">Expense</div>
<div class="t" style="right:1364.80px;top:564.25px;font-size:14.8px;color:#252423;font-weight:normal;text-align:right;">2000</div>
<div class="t" style="left:566.00px;top:564.25px;font-size:14.8px;color:#252423;font-weight:normal;">Salary</div>
<div class="t" style="left:672.20px;top:564.25px;font-size:14.8px;color:#252423;font-weight:normal;">2025</div>
<div class="t" style="left:715.30px;top:564.25px;font-size:14.8px;color:#252423;font-weight:normal;">Qtr 1</div>
<div class="t" style="left:778.30px;top:564.25px;font-size:14.8px;color:#252423;font-weight:normal;">March</div>
<div class="t" style="right:1059.00px;top:564.25px;font-size:14.8px;color:#252423;font-weight:normal;text-align:right;">3</div>
<div class="t" style="left:872.30px;top:564.25px;font-size:14.8px;color:#252423;font-weight:normal;">Monthly paycheck</div>
<div class="t" style="right:826.60px;top:564.25px;font-size:14.8px;color:#252423;font-weight:normal;text-align:right;">2000</div>
<div class="t" style="left:1103.80px;top:564.25px;font-size:14.8px;color:#252423;font-weight:normal;">Income</div>
<div class="t" style="right:1364.80px;top:586.37px;font-size:14.8px;color:#252423;font-weight:normal;text-align:right;">100</div>
<div class="t" style="left:566.00px;top:586.37px;font-size:14.8px;color:#252423;font-weight:normal;">Utilities</div>
<div class="t" style="left:672.20px;top:586.37px;font-size:14.8px;color:#252423;font-weight:normal;">2025</div>
<div class="t" style="left:715.30px;top:586.37px;font-size:14.8px;color:#252423;font-weight:normal;">Qtr 1</div>
<div class="t" style="left:778.30px;top:586.37px;font-size:14.8px;color:#252423;font-weight:normal;">March</div>
<div class="t" style="right:1059.00px;top:586.37px;font-size:14.8px;color:#252423;font-weight:normal;text-align:right;">8</div>
<div class="t" style="left:872.30px;top:586.37px;font-size:14.8px;color:#252423;font-weight:normal;">Electricity bill</div>
<div class="t" style="right:826.60px;top:586.37px;font-size:14.8px;color:#252423;font-weight:normal;text-align:right;">100</div>
<div class="t" style="left:1103.80px;top:586.37px;font-size:14.8px;color:#252423;font-weight:normal;">Expense</div>
<svg class="a" style="left:0;top:0" width="1919" height="1029" viewBox="0 0 1919 1029" fill="none"><g transform="translate(1570,273)"><path d="M0.5 0V17.5H18" stroke="#252423" stroke-width="1"/><rect x="0.5" y="2.5" width="5.3" height="4" fill="#ffffff" stroke="#252423" stroke-width="1"/><rect x="5.8" y="2.5" width="6" height="4" fill="#8cc2ef" stroke="#1f78c8" stroke-width="1"/><rect x="0.5" y="10.5" width="7" height="4" fill="#ffffff" stroke="#252423" stroke-width="1"/><rect x="7.5" y="10.5" width="8.3" height="4" fill="#c8c6c4" stroke="#6b6a69" stroke-width="1"/></g><g transform="translate(1598,273)"><path d="M0.5 0V17.5H18" stroke="#252423" stroke-width="1"/><rect x="3.3" y="11.5" width="4.5" height="6" fill="#ffffff" stroke="#252423" stroke-width="1"/><rect x="3.3" y="5.3" width="4.5" height="6.2" fill="#8cc2ef" stroke="#1f78c8" stroke-width="1"/><rect x="11.8" y="11" width="3.8" height="6.5" fill="#ffffff" stroke="#252423" stroke-width="1"/><rect x="11.8" y="2.3" width="3.8" height="8.7" fill="#c8c6c4" stroke="#6b6a69" stroke-width="1"/></g><g transform="translate(1626,273)"><path d="M0.5 0V17.5H18" stroke="#252423" stroke-width="1"/><rect x="0.5" y="0.5" width="17" height="4" fill="#8cc2ef" stroke="#1f78c8" stroke-width="1"/><rect x="0.5" y="4.5" width="9.7" height="3" fill="#ffffff" stroke="#252423" stroke-width="1"/><rect x="0.5" y="8" width="7" height="2.6" fill="#c8c6c4" stroke="#6b6a69" stroke-width="1"/><rect x="0.5" y="10.8" width="12.5" height="3.3" fill="#ffffff" stroke="#252423" stroke-width="1"/></g><g transform="translate(1654,273)"><path d="M0.5 0V17.5H18" stroke="#252423" stroke-width="1"/><rect x="0.8" y="0.8" width="4.5" height="16.7" fill="#8cc2ef" stroke="#1f78c8" stroke-width="1"/><rect x="5.3" y="7.5" width="3" height="10" fill="#ffffff" stroke="#252423" stroke-width="1"/><rect x="9" y="10.2" width="3.5" height="7.3" fill="#c8c6c4" stroke="#6b6a69" stroke-width="1"/><rect x="13.3" y="5.6" width="4" height="11.9" fill="#ffffff" stroke="#252423" stroke-width="1"/></g><g transform="translate(1682,273)"><path d="M0.5 0V17.5H18" stroke="#252423" stroke-width="1"/><rect x="0.5" y="2.5" width="3.5" height="4" fill="#ffffff" stroke="#252423" stroke-width="1"/><rect x="4" y="2.5" width="12" height="4" fill="#8cc2ef" stroke="#1f78c8" stroke-width="1"/><rect x="0.5" y="10.5" width="10" height="4" fill="#ffffff" stroke="#252423" stroke-width="1"/><rect x="10.5" y="10.5" width="5.5" height="4" fill="#c8c6c4" stroke="#6b6a69" stroke-width="1"/></g><g transform="translate(1710,273)"><path d="M0.5 0V17.5H18" stroke="#252423" stroke-width="1"/><rect x="3.4" y="2.3" width="4.4" height="11.4" fill="#8cc2ef" stroke="#1f78c8" stroke-width="1"/><rect x="3.4" y="13.7" width="4.4" height="3.8" fill="#ffffff" stroke="#252423" stroke-width="1"/><rect x="11.3" y="2.3" width="4.5" height="5.2" fill="#c8c6c4" stroke="#6b6a69" stroke-width="1"/><rect x="11.3" y="7.5" width="4.5" height="10" fill="#ffffff" stroke="#252423" stroke-width="1"/></g><g transform="translate(1570,301)"><path d="M0.5 0V17.5H18" stroke="#252423" stroke-width="1"/><path d="M0.5 9.7L7.5 4.4L11.5 9.7L17.7 3.5" stroke="#252423" fill="none" stroke-width="1.1" /><path d="M0.5 14.1L11.1 3.5L17.7 9.7" stroke="#1f78c8" fill="none" stroke-width="1.1" /></g><g transform="translate(1598,301)"><path d="M0.5 17.5V11L6 1.5L11.5 9L13.5 0.8L17.5 8V17.5Z" stroke="none" fill="#c8c6c4" stroke-width="1" /><path d="M0.5 17.5V10L6 1.5L11 8.5" stroke="#252423" fill="#ffffff" stroke-width="1" /><path d="M13.5 0.8L17.5 8V17.5" stroke="#6b6a69" fill="none" stroke-width="1" /><path d="M0.5 11.5L4.5 15L10.3 7.5L17.5 17.5H0.5Z" stroke="#1f78c8" fill="#8cc2ef" stroke-width="1.1" /></g><g transform="translate(1626,301)"><path d="M0.5 0V17.5H18" stroke="#252423" stroke-width="1"/><path d="M0.5 4.4L6.4 8.4L12.6 2.7L15.3 5.3H17.9V13.7L12.6 8.8L6.4 15L0.5 10.6Z" stroke="#1f78c8" fill="#8cc2ef" stroke-width="1.1" /></g><g transform="translate(1654,301)"><path d="M0.5 0V17.5H18" stroke="#252423" stroke-width="1"/><path d="M0.5 2.5H17.7V13.2L12 8.4L6.2 15L0.5 9.2Z" stroke="none" fill="#8cc2ef" stroke-width="1" /><path d="M0.5 2.5H17.7M17.7 13.2L12 8.4L6.2 15L0.5 9.2" stroke="#1f78c8" fill="none" stroke-width="1.1" /></g><g transform="translate(1682,301)"><path d="M0.5 0V17.5H18" stroke="#252423" stroke-width="1"/><rect x="3.5" y="2.5" width="3.8" height="10.5" fill="#8cc2ef" stroke="#1f78c8" stroke-width="1"/><rect x="3.5" y="13" width="3.8" height="4.5" fill="#ffffff" stroke="#252423" stroke-width="1"/><rect x="11.3" y="2.5" width="3.7" height="4.3" fill="#c8c6c4" stroke="#6b6a69" stroke-width="1"/><rect x="11.3" y="6.8" width="3.7" height="10.7" fill="#ffffff" stroke="#252423" stroke-width="1"/><path d="M0.5 15.5L6 10L9.5 14L17.5 6.5" stroke="#252423" fill="none" stroke-width="1.1" /></g><g transform="translate(1710,301)"><path d="M0.5 0V17.5H18" stroke="#252423" stroke-width="1"/><rect x="3" y="8.3" width="3.8" height="9.2" fill="#8cc2ef" stroke="#1f78c8" stroke-width="1"/><rect x="7.3" y="1.2" width="3.5" height="16.3" fill="#ffffff" stroke="#252423" stroke-width="1"/><rect x="11.8" y="5" width="3.5" height="12.5" fill="#c8c6c4" stroke="#6b6a69" stroke-width="1"/><path d="M0.5 15.5L7 8.5L10.5 13L17.5 6.5" stroke="#252423" fill="none" stroke-width="1.1" /></g><g transform="translate(1570,329)"><path d="M0.5 0V17.5H18" stroke="#252423" stroke-width="1"/><path d="M2 3.5Q5 6.5 8.5 6Q12 5 15.8 2.5V8Q12 10.5 8.5 11.5Q5 11.5 2 9Z" stroke="#6b6a69" fill="#c8c6c4" stroke-width="0.8" /><path d="M2 9Q5 11.5 8.5 11.5Q12 10.5 15.8 8V12.5Q12 15 8.5 15.5Q5 15 2 12.5Z" stroke="#1f78c8" fill="#8cc2ef" stroke-width="1.3" /><rect x="2" y="11.8" width="3" height="2.7" fill="#e8a33d" stroke="#d86c14" stroke-width="0.8"/><rect x="12.5" y="11.5" width="3.3" height="2.8" fill="#e8a33d" stroke="#d86c14" stroke-width="0.8"/></g><g transform="translate(1598,329)"><path d="M0.5 0V17.5H18" stroke="#252423" stroke-width="1"/><rect x="2.5" y="5.5" width="2.6" height="12" fill="#ffffff" stroke="#252423" stroke-width="1"/><rect x="5.1" y="5.5" width="2.5" height="5" fill="#c8c6c4" stroke="#6b6a69" stroke-width="1"/><rect x="7.6" y="1.5" width="2.4" height="9" fill="#8cc2ef" stroke="#1f78c8" stroke-width="1"/><rect x="10" y="1.5" width="2.6" height="16" fill="#ffffff" stroke="#252423" stroke-width="1"/><rect x="12.6" y="1.5" width="3" height="16" fill="#ffffff" stroke="#252423" stroke-width="1"/></g><g transform="translate(1626,329)"><rect x="0.5" y="1.3" width="17" height="4.3" fill="#8cc2ef" stroke="#1f78c8" stroke-width="1"/><rect x="2.8" y="5.6" width="12.4" height="4.6" fill="#8cc2ef" stroke="#1f78c8" stroke-width="1"/><rect x="5.4" y="10.2" width="7.2" height="6" fill="#8cc2ef" stroke="#1f78c8" stroke-width="1"/></g><g transform="translate(1654,329)"><path d="M0.5 0V17.5H18" stroke="#252423" stroke-width="1"/><rect x="13.2" y="1.2" width="2.5" height="2.5" fill="#252423"/><rect x="3.2" y="12.3" width="2.5" height="2.5" fill="#252423"/><rect x="3.2" y="4.3" width="2.5" height="2.5" fill="#8cc2ef"/><rect x="8" y="7.4" width="2.5" height="2.5" fill="#8cc2ef"/><rect x="13.2" y="11.4" width="2.5" height="2.5" fill="#8cc2ef"/></g><g transform="translate(1682,329)"><circle cx="9" cy="9" r="8.4" fill="#f7f7f7" stroke="#252423" stroke-width="1"/><path d="M9 0.6A8.4 8.4 0 0 1 14.6 15.3L9 9Z" stroke="#1f78c8" fill="#8cc2ef" stroke-width="1.1" /></g><g transform="translate(1710,329)"><path d="M9 0.6A8.4 8.4 0 1 1 8.99 0.6ZM9 4.4A4.6 4.6 0 1 0 9.01 4.4Z" stroke="#252423" fill="#ffffff" stroke-width="1" fill-rule="evenodd"/><path d="M9 0.6A8.4 8.4 0 1 1 0.6 9H4.4A4.6 4.6 0 1 0 9 4.4Z" stroke="#1f78c8" fill="#8cc2ef" stroke-width="1.1" /></g><g transform="translate(1570,357)"><rect x="0.5" y="0.5" width="17" height="17" fill="#ffffff" stroke="#252423" stroke-width="1"/><rect x="0.5" y="0.5" width="8" height="8.5" fill="#8cc2ef" stroke="#1f78c8" stroke-width="1"/><rect x="0.5" y="9" width="8" height="8.5" fill="#8cc2ef" stroke="#1f78c8" stroke-width="1"/><path d="M8.5 5.5H17.5M12.5 5.5V17.5M8.5 11.5H17.5" stroke="#252423" fill="none" stroke-width="1" /></g><g transform="translate(1598,357)"><circle cx="9" cy="8" r="6" fill="#fff" stroke="#252423" stroke-width="1"/><path d="M5.5 6Q7 3 9.5 3.5Q8.5 6 6.5 7Q5 8 5.5 6ZM10 8Q12.5 7.5 13.5 9.5Q12 12.5 10 12Q9 10 10 8Z" stroke="none" fill="#2a9d3c" stroke-width="1" /><path d="M3.5 2Q0 6 2 11Q4.5 15.5 10 15M9 14V17.5M4.5 17.5H13.5" stroke="#252423" fill="none" stroke-width="1" /></g><g transform="translate(1626,357)"><path d="M0.5 1.5L5 1L6.5 4L9 2L17.5 1.5V8L10 9L8.5 17L5 16L0.5 11Z" stroke="#6b6a69" fill="#c8c6c4" stroke-width="1" /><path d="M0.5 1.5L5 1L6.5 4L6 9L0.5 8.5Z" stroke="#1f78c8" fill="#8cc2ef" stroke-width="1" /><path d="M17.5 8V15.5L13 15.8L11.5 17.5L8.5 17L10 9Z" stroke="#1f78c8" fill="#8cc2ef" stroke-width="1.2" /></g><g transform="translate(1654,357)"><path d="M10.5 0L0.5 15.8L9 12.8L14.5 18.5Z" stroke="none" fill="#45a3e0" stroke-width="1" /><path d="M10.5 0L14.5 18.5L9 12.8Z" stroke="none" fill="#1a6fc4" stroke-width="1" /></g><g transform="translate(1682,357)"><path d="M1 13A8 8 0 0 1 17 13H14A5 5 0 0 0 4 13Z" stroke="#252423" fill="#ffffff" stroke-width="1" /><path d="M8 5.1A8 8 0 0 1 17 13H14A5 5 0 0 0 9 8Z" stroke="#1f78c8" fill="#8cc2ef" stroke-width="1" /><path d="M9 12.5L12.5 9" stroke="#252423" fill="none" stroke-width="1.6" /></g><g transform="translate(1710,357)"><rect x="0.5" y="2.5" width="17" height="13" fill="#ffffff" stroke="#252423" stroke-width="1"/><text x="2.3" y="10.5" font-family="Liberation Sans" font-size="8.2" fill="#3e9bd8" letter-spacing="-0.3">123</text><path d="M2.5 12.8H15.5" stroke="#252423" fill="none" stroke-width="0.8" /></g><g transform="translate(1570,385)"><rect x="0.5" y="0.8" width="17" height="16.5" fill="#ffffff" stroke="#252423" stroke-width="1"/><path d="M3.5 3.5V14" stroke="#6b6a69" fill="none" stroke-width="0.8" /><path d="M5 4.8H13.5M5 10.8H13.5" stroke="#1f78c8" fill="none" stroke-width="1.6" /><path d="M5 7.7H9.5M5 13.4H9.5" stroke="#6b6a69" fill="none" stroke-width="0.8" /></g><g transform="translate(1598,385)"><rect x="0.5" y="1.5" width="17" height="14" fill="#ffffff" stroke="#252423" stroke-width="1"/><path d="M2.3 7.5L4.6 3.3L7 7.5Z" stroke="#2a9d3c" fill="#63c074" stroke-width="0.9" /><path d="M9.5 3.3H14.3L11.9 7.5Z" stroke="#d13438" fill="#f1707b" stroke-width="0.9" /><path d="M2.3 11.3H15.5" stroke="#6b6a69" fill="none" stroke-width="0.8" /></g><g transform="translate(1626,385)"><path d="M12.5 16.5H0.5V0.5H17.5V9" stroke="#252423" fill="none" stroke-width="1" /><rect x="1" y="1" width="16" height="2" fill="#c8c6c4" stroke="none" stroke-width="0"/><path d="M0.5 3H17.5" stroke="#252423" fill="none" stroke-width="0.8" /><rect x="3.3" y="6.5" width="2.5" height="2.5" fill="#fff" stroke="#6b6a69" stroke-width="0.9"/><rect x="3.3" y="11.5" width="2.5" height="2.5" fill="#fff" stroke="#6b6a69" stroke-width="0.9"/><path d="M9.5 9.5H18L15 13V17.3H12.5V13Z" stroke="#252423" fill="#ffffff" stroke-width="1.1" /></g><g transform="translate(1654,385)"><rect x="-2.5" y="-2.5" width="23" height="23" fill="none" stroke="#252423" stroke-width="1.5"/><rect x="0.5" y="0.5" width="17" height="17" fill="#ffffff" stroke="#252423" stroke-width="1"/><rect x="1" y="1" width="16" height="2" fill="#c8c6c4" stroke="none" stroke-width="0"/><path d="M0.5 3H17.5M0.5 7.8H17.5M0.5 12.5H17.5M6.2 3V17.5M11.8 3V17.5" stroke="#6b6a69" fill="none" stroke-width="0.9" /><rect x="0.5" y="0.5" width="17" height="17" fill="none" stroke="#252423" stroke-width="1"/></g><g transform="translate(1682,385)"><rect x="0.5" y="0.5" width="17" height="17" fill="#ffffff" stroke="#252423" stroke-width="1"/><rect x="1" y="1" width="16" height="2" fill="#c8c6c4" stroke="none" stroke-width="0"/><rect x="11.5" y="3" width="6" height="14.5" fill="#8cc2ef" stroke="none" stroke-width="0"/><rect x="0.5" y="12" width="17" height="5.5" fill="#8cc2ef" stroke="none" stroke-width="0"/><path d="M0.5 3H17.5M0.5 7.5H17.5M0.5 12H17.5M6 3V17.5M11.5 3V17.5" stroke="#6b6a69" fill="none" stroke-width="0.9" /><rect x="0.5" y="0.5" width="17" height="17" fill="none" stroke="#252423" stroke-width="1"/></g><g transform="translate(1710,385)"><text x="3.3" y="14.8" font-family="Liberation Sans" font-weight="bold" font-size="16.5" fill="#1f78c8">R</text></g><g transform="translate(1570,413)"><text x="-0.3" y="12.6" font-family="Liberation Sans" font-weight="bold" font-size="16" fill="#1f78c8" letter-spacing="-1.3">Py</text></g><g transform="translate(1598,413)"><path d="M0.5 0V17.5H18" stroke="#252423" stroke-width="1"/><path d="M1 3.5H13M1 8H9.5M1 12.3H5.5" stroke="#1f78c8" fill="none" stroke-width="0.9" /><circle cx="14.5" cy="3.3" r="1.8" fill="#8cc2ef" stroke="#1f78c8" stroke-width="1"/><rect x="10" y="6.8" width="2.2" height="2.2" fill="#c8c6c4" stroke="#6b6a69" stroke-width="0.8"/><rect x="5.5" y="11.2" width="2.2" height="2.2" fill="#c8c6c4" stroke="#6b6a69" stroke-width="0.8"/></g><g transform="translate(1626,413)"><rect x="0.5" y="6.5" width="5.5" height="3.5" fill="#8cc2ef" stroke="#1f78c8" stroke-width="1"/><rect x="11.8" y="0.5" width="5.7" height="3.5" fill="#8cc2ef" stroke="#1f78c8" stroke-width="1"/><rect x="11.8" y="6.5" width="5.7" height="3.5" fill="#8cc2ef" stroke="#1f78c8" stroke-width="1"/><rect x="11.8" y="12.8" width="5.7" height="3.5" fill="#8cc2ef" stroke="#1f78c8" stroke-width="1"/><path d="M6 8.2H9M9.3 2.2V14.5M9.3 2.2H11.8M9.3 8.2H11.8M9.3 14.5H11.8" stroke="#252423" fill="none" stroke-width="1" /></g><g transform="translate(1654,413)"><path d="M0.5 1H17.5V11.5H7L3.2 17V11.5H0.5Z" stroke="#1f78c8" fill="#f7f7f7" stroke-width="1.2" /></g><g transform="translate(1682,413)"><path d="M1.5 0.5H11.5L16 5V17.5H1.5Z" stroke="#252423" fill="#ffffff" stroke-width="1" /><path d="M11.5 0.5V5H16" stroke="#252423" fill="none" stroke-width="1" /><circle cx="2" cy="6.8" r="1.4" fill="#8cc2ef" stroke="#1f78c8" stroke-width="0.8"/><path d="M4.5 8H11.5M4.5 11H10.5" stroke="#1f78c8" fill="none" stroke-width="1" /></g><g transform="translate(1710,413)"><path d="M4 1H14V7Q14 12 9 12Q4 12 4 7Z" stroke="#252423" fill="#ffffff" stroke-width="1" /><path d="M4 3H0.5V5Q0.5 9 4.5 9M14 3H17.5V5Q17.5 9 13.5 9M9 12V15" stroke="#252423" fill="none" stroke-width="1" /><rect x="4.3" y="1" width="9.4" height="1.6" fill="#8cc2ef" stroke="#1f78c8" stroke-width="0.9"/><rect x="4.3" y="15.2" width="9.4" height="2" fill="#8cc2ef" stroke="#1f78c8" stroke-width="0.9"/></g><g transform="translate(1570,441)"><path d="M1 0.5H11L15.5 5V17.5H1Z" stroke="#252423" fill="#ffffff" stroke-width="1.1" /><path d="M11 0.5V5H15.5" stroke="#252423" fill="none" stroke-width="1" /><rect x="3.5" y="11" width="1.8" height="5" fill="#3b3a39" stroke="none" stroke-width="0"/><rect x="7" y="13" width="1.8" height="3" fill="#3b3a39" stroke="none" stroke-width="0"/><rect x="10.5" y="9" width="1.8" height="7" fill="#3b3a39" stroke="none" stroke-width="0"/></g><g transform="translate(1598,441)"><rect x="1" y="3" width="17" height="13" fill="#ffffff" stroke="#252423" stroke-width="1"/><text x="4.2" y="13" font-family="Liberation Sans" font-size="8.3" fill="#3e9bd8" letter-spacing="-0.3">123</text><path d="M3.5 14.5H16" stroke="#252423" fill="none" stroke-width="0.8" /><path d="M5 0.5H9L6.5 4.5H9.2L1.5 12.5L3.5 6.5H0.5Z" stroke="#d86c14" fill="#f4b04f" stroke-width="0.8" /></g><g transform="translate(1626,441)"><rect x="9.5" y="1.2" width="7" height="6.5" fill="#ffffff" stroke="#6b6a69" stroke-width="1"/><rect x="1" y="9" width="7" height="6.5" fill="#ffffff" stroke="#6b6a69" stroke-width="1"/><rect x="3.5" y="4" width="4" height="3.5" fill="#ffffff" stroke="#1f78c8" stroke-width="1"/><path d="M9.5 9.5H18.5L15.5 13V17.3H13V13Z" stroke="#252423" fill="#ffffff" stroke-width="1.1" /><path d="M5 0.5H9L6.5 4.5H9.2L1.5 12.5L3.5 6.5H0.5Z" stroke="#d86c14" fill="#f4b04f" stroke-width="0.8" /></g><g transform="translate(1654,441)"><path d="M5.5 1.5H17.5V8M5.5 17H14M1 9V17H3" stroke="#1f78c8" fill="none" stroke-width="1.3" /><path d="M9 15L10 10L12.5 8.5L13 5L16.5 3.5V9L13 12L12 15Z" stroke="none" fill="#8cc2ef" stroke-width="1" /><path d="M1 0.5H4V5L2.5 6.8L1 5Z" stroke="#d86c14" fill="#d86c14" stroke-width="1" /><circle cx="2.5" cy="2.5" r="0.9" fill="#fff"/><circle cx="15.5" cy="15.5" r="2.4" fill="#d86c14"/><circle cx="17.5" cy="10.5" r="1.3" fill="#d86c14"/></g><g transform="translate(1682,441)"><path d="M7.5 1L1 9L7.5 17L17.5 9Z M4.5 4.5L14.5 13 M4.5 13.5L14.5 4.5 M7.5 1L10 -0.5L17.5 6.5" stroke="#9b3fb5" fill="none" stroke-width="1.2" /></g><g transform="translate(1710,441)"><path d="M0.5 1.5H13L17.5 9L13 16.5H0.5L5.5 9Z" stroke="#2b88d8" fill="#f7f7f7" stroke-width="1.2" /><path d="M8 16.5L14.5 6.5" stroke="#2b88d8" fill="none" stroke-width="1.2" /></g><rect x="1572" y="476" width="2" height="2" fill="#252423"/><rect x="1578" y="476" width="2" height="2" fill="#252423"/><rect x="1584" y="476" width="2" height="2" fill="#252423"/></svg>
<svg class="a" style="left:0;top:0" width="1919" height="1029" viewBox="0 0 1919 1029" fill="none"><path d="M1542 173.5L1536.5 179L1542 184.5M1548 173.5L1542.5 179L1548 184.5" stroke="#252423" stroke-width="1.1"/><path d="M1549.2 201.5V213.5L1543.5 208.8H1538.7V206.2H1543.5Z" stroke="#252423" stroke-width="1.1" stroke-linejoin="round"/></svg>
<div class="t" style="left:1536.5px;top:222.5px;font-size:15px;-webkit-text-stroke:0.5px #252423;letter-spacing:-0.3px;color:#252423;transform-origin:0 0;transform:translate(13px,0) rotate(90deg)">Filters</div>
<div class="t" style="left:1567.40px;top:172.10px;font-size:15px;color:#252423;font-weight:normal;font-weight:bold;letter-spacing:-0.2px">Visualizations</div>
<svg class="a" style="left:0;top:0" width="1919" height="1029" viewBox="0 0 1919 1029" fill="none"><path d="M1719.5 173.5L1725 179L1719.5 184.5M1725.5 173.5L1731 179L1725.5 184.5" stroke="#252423" stroke-width="1.1"/></svg>
<div class="t" style="left:1567.40px;top:199.81px;font-size:11.8px;color:#252423;font-weight:normal;font-weight:bold;letter-spacing:-0.2px">Build visual</div>
<div class="a" style="left:1567px;top:217px;width:32px;height:32px;background:#d6d4d2;border-radius:2px"></div>
<svg class="a" style="left:0;top:0" width="1919" height="1029" viewBox="0 0 1919 1029" fill="none"><path d="M1571 221.5H1590" stroke="#252423" stroke-width="1.1"/><rect x="1571.5" y="226" width="23" height="8" fill="#117865" stroke="#252423" stroke-width="1" stroke-dasharray="1.5 1"/><rect x="1571.5" y="236.8" width="23" height="8" fill="#117865" stroke="#252423" stroke-width="1" stroke-dasharray="1.5 1"/></svg>
<div class="a" style="left:1633px;top:217px;width:32px;height:32px;background:#e1dfdd"></div>
<svg class="a" style="left:0;top:0" width="1919" height="1029" viewBox="0 0 1919 1029" fill="none"><rect x="1633.5" y="217.5" width="31" height="31" stroke="#a19f9d" stroke-width="0.6" stroke-dasharray="0.8 30"/><path d="M1640 240.5V231.2H1645.5M1652.6 227.4H1658.8" stroke="#484644" stroke-width="1.2"/><path d="M1645.6 222.4H1652.4V232.5L1645.6 238.5Z" fill="#117865" stroke="#3b3a39" stroke-width="0.8"/><path d="M1660.8 229.8Q1662 230.8 1661 232L1652.2 240.2L1650.3 238.4L1659 230.2Q1660 229.2 1660.8 229.8Z" fill="#fff" stroke="#252423" stroke-width="0.9"/><path d="M1650.3 238.4L1652.2 240.2Q1652.3 243 1649.5 244.3Q1646 245.2 1642.5 243.3Q1645.5 243 1646.8 241Q1648 238.6 1650.3 238.4Z" fill="#117865" stroke="#252423" stroke-width="0.9"/><circle cx="1713" cy="231" r="9.6" stroke="#252423" stroke-width="1.3"/><path d="M1704 232L1708 229L1711 231L1720.5 225.5M1708 233V239M1711 234V240.5M1714 233V240.5M1717 231V239" stroke="#252423" stroke-width="1"/><path d="M1719.5 238L1726 244.5" stroke="#252423" stroke-width="2.2"/><path d="M1559 261.5H1575L1583 253.8L1591 261.5H1739" stroke="#8a8886" stroke-width="1"/></svg>
<div class="a" style="left:1575.5px;top:261px;width:15px;height:1.5px;background:#f3f2f1"></div>
<svg class="a" style="left:0;top:0" width="1919" height="1029" viewBox="0 0 1919 1029" fill="none"><path d="M1575 261.5L1583 253.8L1591 261.5" stroke="#8a8886" stroke-width="1"/></svg>
<div class="a" style="left:1559px;top:496px;width:180px;height:1px;background:#d2d0ce"></div>
<div class="t" style="left:1571.40px;top:507.44px;font-size:12px;color:#252423;font-weight:normal;">Columns</div>
<div class="a" style="left:1563.5px;top:527.5px;width:169px;height:238px;border:1px dashed #c8c6c4;background:#ffffff;box-sizing:border-box"></div>
<div class="a" style="left:1566.5px;top:531.2px;width:163px;height:22.4px;background:#edebe9;border:1px solid #d2d0ce;border-radius:2px;box-sizing:border-box"></div>
<div class="t" style="left:1571.40px;top:536.76px;font-size:12.1px;color:#252423;font-weight:normal;">Sum of Amount</div>
<div class="a" style="left:1566.5px;top:556.3px;width:163px;height:22.4px;background:#edebe9;border:1px solid #d2d0ce;border-radius:2px;box-sizing:border-box"></div>
<div class="t" style="left:1571.40px;top:561.86px;font-size:12.1px;color:#252423;font-weight:normal;">Category</div>
<div class="a" style="left:1566.5px;top:682.4px;width:163px;height:22.4px;background:#edebe9;border:1px solid #d2d0ce;border-radius:2px;box-sizing:border-box"></div>
<div class="t" style="left:1571.40px;top:687.96px;font-size:12.1px;color:#252423;font-weight:normal;">Description</div>
<div class="a" style="left:1566.5px;top:707.5px;width:163px;height:22.4px;background:#edebe9;border:1px solid #d2d0ce;border-radius:2px;box-sizing:border-box"></div>
<div class="t" style="left:1571.40px;top:713.06px;font-size:12.1px;color:#252423;font-weight:normal;">Total Amount</div>
<div class="a" style="left:1566.5px;top:732.6px;width:163px;height:22.4px;background:#edebe9;border:1px solid #d2d0ce;border-radius:2px;box-sizing:border-box"></div>
<div class="t" style="left:1571.40px;top:738.16px;font-size:12.1px;color:#252423;font-weight:normal;">Type</div>
<div class="a" style="left:1566.5px;top:581.2px;width:163px;height:98.2px;background:#edebe9;border:1px solid #d2d0ce;border-radius:2px;box-sizing:border-box"></div>
<div class="t" style="left:1571.40px;top:586.76px;font-size:12.1px;color:#252423;font-weight:normal;">Date</div>
<div class="t" style="left:1579.30px;top:607.16px;font-size:12.1px;color:#252423;font-weight:normal;">Year</div>
<div class="t" style="left:1579.30px;top:626.16px;font-size:12.1px;color:#252423;font-weight:normal;">Quarter</div>
<div class="t" style="left:1579.30px;top:645.16px;font-size:12.1px;color:#252423;font-weight:normal;">Month</div>
<div class="t" style="left:1579.30px;top:664.16px;font-size:12.1px;color:#252423;font-weight:normal;">Day</div>
<svg class="a" style="left:0;top:0" width="1919" height="1029" viewBox="0 0 1919 1029" fill="none"><path d="M1699.3 540.0L1705 545.6L1710.7 540.0" stroke="#252423" stroke-width="1"/><path d="M1717 539.0L1725 547.0M1725 539.0L1717 547.0" stroke="#252423" stroke-width="1"/><path d="M1699.3 565.1L1705 570.7L1710.7 565.1" stroke="#252423" stroke-width="1"/><path d="M1717 564.1L1725 572.1M1725 564.1L1717 572.1" stroke="#252423" stroke-width="1"/><path d="M1699.3 691.2L1705 696.8L1710.7 691.2" stroke="#252423" stroke-width="1"/><path d="M1717 690.2L1725 698.2M1725 690.2L1717 698.2" stroke="#252423" stroke-width="1"/><path d="M1699.3 716.3L1705 721.9L1710.7 716.3" stroke="#252423" stroke-width="1"/><path d="M1717 715.3L1725 723.3M1725 715.3L1717 723.3" stroke="#252423" stroke-width="1"/><path d="M1699.3 741.4L1705 747.0L1710.7 741.4" stroke="#252423" stroke-width="1"/><path d="M1717 740.4L1725 748.4M1725 740.4L1717 748.4" stroke="#252423" stroke-width="1"/><path d="M1699.3 589.8L1705 595.4L1710.7 589.8" stroke="#252423" stroke-width="1"/><path d="M1717 588.8L1725 596.8M1725 588.8L1717 596.8" stroke="#252423" stroke-width="1"/><path d="M1717 609.2L1725 617.2M1725 609.2L1717 617.2" stroke="#252423" stroke-width="1"/><path d="M1717 628.2L1725 636.2M1725 628.2L1717 636.2" stroke="#252423" stroke-width="1"/><path d="M1717 647.2L1725 655.2M1725 647.2L1717 655.2" stroke="#252423" stroke-width="1"/><path d="M1717 666.2L1725 674.2M1725 666.2L1717 674.2" stroke="#252423" stroke-width="1"/></svg>
<div class="t" style="left:1571.00px;top:778.13px;font-size:12.6px;color:#252423;font-weight:normal;-webkit-text-stroke:0.32px #252423;letter-spacing:0px">Drill through</div>
<div class="t" style="left:1571.00px;top:804.46px;font-size:12.1px;color:#252423;font-weight:normal;">Cross-report</div>
<div class="t" style="left:1571.00px;top:830.36px;font-size:12.1px;color:#252423;font-weight:normal;">Keep all filters</div>
<div class="a" style="left:1685px;top:801.5px;width:31.5px;height:15.5px;border:1px solid #605e5c;border-radius:8px;box-sizing:border-box;background:#fff"></div>
<svg class="a" style="left:0;top:0" width="1919" height="1029" viewBox="0 0 1919 1029" fill="none"><circle cx="1694" cy="809.2" r="4" fill="#605e5c"/></svg>
<div class="t" style="left:1699.3px;top:803.6px;font-size:10.6px;color:#605e5c;letter-spacing:-0.4px">Off</div>
<div class="a" style="left:1685px;top:828.5px;width:31.5px;height:15.5px;border-radius:8px;background:#117865"></div>
<svg class="a" style="left:0;top:0" width="1919" height="1029" viewBox="0 0 1919 1029" fill="none"><circle cx="1708.5" cy="836.2" r="4.2" fill="#fff"/></svg>
<div class="t" style="left:1689.8px;top:830.6px;font-size:10.6px;color:#fff;letter-spacing:-0.3px;-webkit-text-stroke:0.3px #fff">On</div>
<div class="a" style="left:1563.5px;top:853.3px;width:169px;height:26.5px;border:1px dashed #c8c6c4;background:#ffffff;box-sizing:border-box"></div>
<div class="t" style="left:1571.80px;top:861.97px;font-size:12.2px;color:#252423;font-weight:normal;">Add drill-through fields here</div>
<div class="t" style="left:1748.70px;top:172.50px;font-size:15px;color:#252423;font-weight:normal;font-weight:bold;letter-spacing:-0.2px">Data</div>
<svg class="a" style="left:0;top:0" width="1919" height="1029" viewBox="0 0 1919 1029" fill="none"><path d="M1900 173.5L1905.5 179L1900 184.5M1906 173.5L1911.5 179L1906 184.5" stroke="#252423" stroke-width="1.1"/></svg>
<div class="a" style="left:1744.7px;top:205.3px;width:170.3px;height:22.7px;background:#fff;border:1px solid #c8c6c4;border-bottom:1px solid #616161;border-radius:4px;box-sizing:border-box"></div>
<svg class="a" style="left:0;top:0" width="1919" height="1029" viewBox="0 0 1919 1029" fill="none"><circle cx="1762.5" cy="216" r="5.2" stroke="#3b3a39" stroke-width="1.1"/><path d="M1766.2 219.8L1771 224" stroke="#3b3a39" stroke-width="1.2"/></svg>
<div class="t" style="left:1778.20px;top:210.83px;font-size:13.2px;color:#605e5c;font-weight:normal;">Search</div>
<svg class="a" style="left:0;top:0" width="1919" height="1029" viewBox="0 0 1919 1029" fill="none"><path d="M1756 244.3L1761.5 249.8L1756 255.3" stroke="#605e5c" stroke-width="1"/><rect x="1768.5" y="243.5" width="12.5" height="12" stroke="#252423" stroke-width="1"/><path d="M1768.5 246.5H1781M1768.5 250H1781M1772.5 243.5V255.5M1776.8 243.5V255.5" stroke="#252423" stroke-width="0.8"/><circle cx="1781" cy="255.3" r="5.5" fill="#117865" stroke="#f3f2f1" stroke-width="0.8"/><path d="M1778.6 255.5L1780.4 257.2L1783.5 253.8" stroke="#fff" stroke-width="1.1"/></svg>
<div class="t" style="left:1787.60px;top:246.03px;font-size:11.3px;color:#252423;font-weight:normal;">Budget_Tracker</div>
<div class="a" style="left:1592px;top:172px;width:114px;height:32px;background:#fff;border-radius:3px;box-shadow:0 3.2px 7.2px rgba(0,0,0,0.14),0 0.6px 1.8px rgba(0,0,0,0.11)"></div>
<svg class="a" style="left:0;top:0" width="1919" height="1029" viewBox="0 0 1919 1029" fill="none"><path d="M1638.7 203L1648.6 213L1658.5 203Z" fill="#fff"/></svg>
<div class="t" style="left:1600.70px;top:182.70px;font-size:11.7px;color:#252423;font-weight:normal;">Format your visual</div>
</body></html>
